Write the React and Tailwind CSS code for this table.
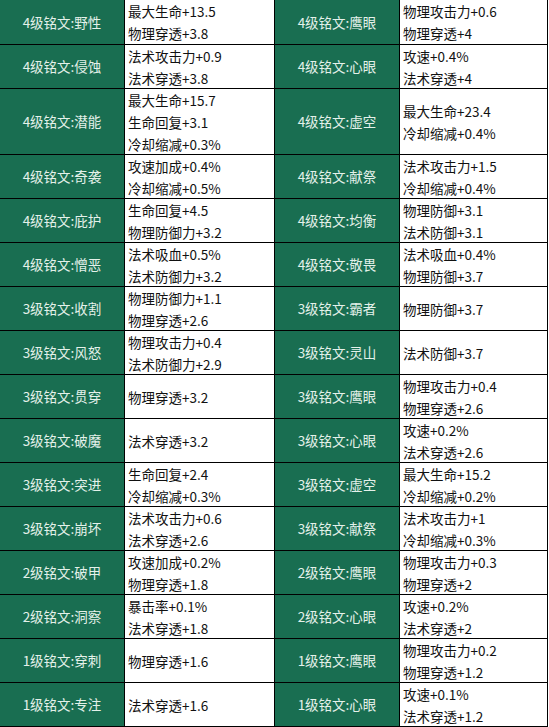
const rows = [
  { h: 'h-[45px]', a: '4级铭文:野性', as: ['最大生命+13.5', '物理穿透+3.8'], b: '4级铭文:鹰眼', bs: ['物理攻击力+0.6', '物理穿透+4'] },
  { h: 'h-[44px]', a: '4级铭文:侵蚀', as: ['法术攻击力+0.9', '法术穿透+3.8'], b: '4级铭文:心眼', bs: ['攻速+0.4%', '法术穿透+4'] },
  { h: 'h-[66px]', a: '4级铭文:潜能', as: ['最大生命+15.7', '生命回复+3.1', '冷却缩减+0.3%'], b: '4级铭文:虚空', bs: ['最大生命+23.4', '冷却缩减+0.4%'] },
  { h: 'h-[44px]', a: '4级铭文:奇袭', as: ['攻速加成+0.4%', '冷却缩减+0.5%'], b: '4级铭文:献祭', bs: ['法术攻击力+1.5', '冷却缩减+0.4%'] },
  { h: 'h-[44px]', a: '4级铭文:庇护', as: ['生命回复+4.5', '物理防御力+3.2'], b: '4级铭文:均衡', bs: ['物理防御+3.1', '法术防御+3.1'] },
  { h: 'h-[44px]', a: '4级铭文:憎恶', as: ['法术吸血+0.5%', '法术防御力+3.2'], b: '4级铭文:敬畏', bs: ['法术吸血+0.4%', '物理防御+3.7'] },
  { h: 'h-[44px]', a: '3级铭文:收割', as: ['物理防御力+1.1', '物理穿透+2.6'], b: '3级铭文:霸者', bs: ['物理防御+3.7'] },
  { h: 'h-[44px]', a: '3级铭文:风怒', as: ['物理攻击力+0.4', '法术防御力+2.9'], b: '3级铭文:灵山', bs: ['法术防御+3.7'] },
  { h: 'h-[44px]', a: '3级铭文:贯穿', as: ['物理穿透+3.2'], b: '3级铭文:鹰眼', bs: ['物理攻击力+0.4', '物理穿透+2.6'] },
  { h: 'h-[44px]', a: '3级铭文:破魔', as: ['法术穿透+3.2'], b: '3级铭文:心眼', bs: ['攻速+0.2%', '法术穿透+2.6'] },
  { h: 'h-[44px]', a: '3级铭文:突进', as: ['生命回复+2.4', '冷却缩减+0.3%'], b: '3级铭文:虚空', bs: ['最大生命+15.2', '冷却缩减+0.2%'] },
  { h: 'h-[44px]', a: '3级铭文:崩坏', as: ['法术攻击力+0.6', '法术穿透+2.6'], b: '3级铭文:献祭', bs: ['法术攻击力+1', '冷却缩减+0.3%'] },
  { h: 'h-[44px]', a: '2级铭文:破甲', as: ['攻速加成+0.2%', '物理穿透+1.8'], b: '2级铭文:鹰眼', bs: ['物理攻击力+0.3', '物理穿透+2'] },
  { h: 'h-[44px]', a: '2级铭文:洞察', as: ['暴击率+0.1%', '法术穿透+1.8'], b: '2级铭文:心眼', bs: ['攻速+0.2%', '法术穿透+2'] },
  { h: 'h-[44px]', a: '1级铭文:穿刺', as: ['物理穿透+1.6'], b: '1级铭文:鹰眼', bs: ['物理攻击力+0.2', '物理穿透+1.2'] },
  { h: 'h-[44px]', a: '1级铭文:专注', as: ['法术穿透+1.6'], b: '1级铭文:心眼', bs: ['攻速+0.1%', '法术穿透+1.2'] },
];

function NameCell({ text, width }) {
  return (
    <div className={`${width} flex items-center justify-center border-r border-b border-black bg-[#196e51] text-[13.5px] text-[#e4f1ea]`}>
      {text}
    </div>
  );
}

function StatCell({ lines, width }) {
  return (
    <div className={`${width} flex flex-col justify-center border-r border-b border-black bg-white pl-[3px] text-[13.5px] leading-[22px] text-[#111]`}>
      {lines.map((l) => (
        <div key={l}>{l}</div>
      ))}
    </div>
  );
}

export default function App() {
  return (
    <div
      className="w-[549px] h-[727px] overflow-hidden bg-white"
      style={{ fontFamily: '"Noto Sans CJK SC", "Noto Sans", sans-serif' }}
    >
      {rows.map((r) => (
        <div key={r.a + r.b} className={`flex ${r.h}`}>
          <NameCell text={r.a} width="w-[125px]" />
          <StatCell lines={r.as} width="w-[150px]" />
          <NameCell text={r.b} width="w-[125px]" />
          <StatCell lines={r.bs} width="w-[148px]" />
        </div>
      ))}
    </div>
  );
}
